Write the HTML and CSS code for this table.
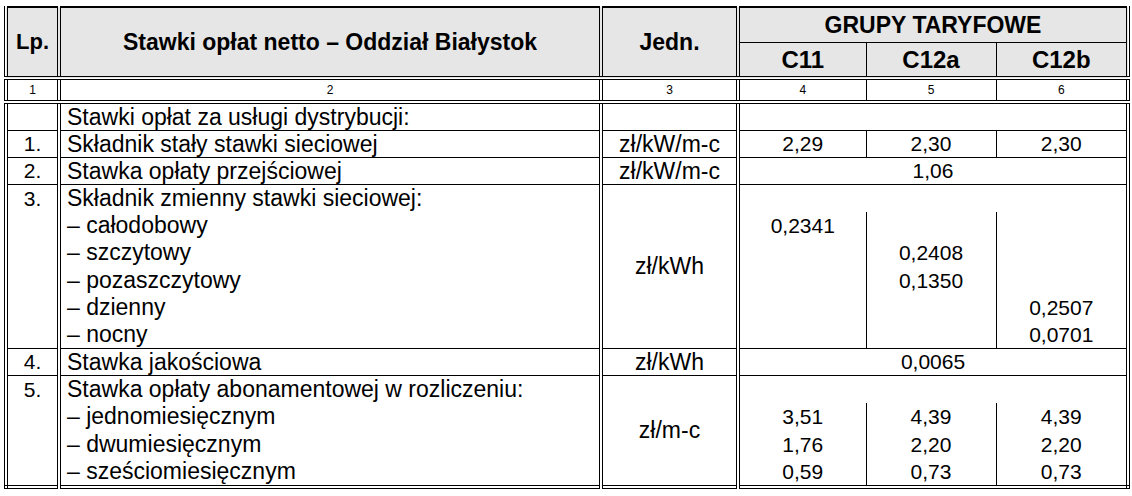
FILE: index.html
```html
<!DOCTYPE html>
<html lang="pl">
<head>
<meta charset="utf-8">
<title>Stawki opłat netto – Oddział Białystok</title>
<link rel="stylesheet" href="styles.css">
</head>
<body>
<table class="tariff">
  <colgroup>
    <col class="c-lp"><col class="c-desc"><col class="c-unit"><col class="c-g1"><col class="c-g2"><col class="c-g3">
  </colgroup>
  <thead>
    <tr class="h1">
      <th rowspan="2" class="lph">Lp.</th>
      <th rowspan="2">Stawki opłat netto – Oddział Białystok</th>
      <th rowspan="2">Jedn.</th>
      <th colspan="3">GRUPY TARYFOWE</th>
    </tr>
    <tr class="h2">
      <th>C11</th><th>C12a</th><th>C12b</th>
    </tr>
    <tr class="nums">
      <td>1</td><td>2</td><td>3</td><td>4</td><td>5</td><td>6</td>
    </tr>
  </thead>
  <tbody>
    <tr>
      <td></td><td class="desc">Stawki opłat za usługi dystrybucji:</td><td></td><td colspan="3"></td>
    </tr>
    <tr>
      <td class="lp">1.</td><td class="desc">Składnik stały stawki sieciowej</td><td class="unit">zł/kW/m-c</td>
      <td class="v">2,29</td><td class="v">2,30</td><td class="v">2,30</td>
    </tr>
    <tr>
      <td class="lp">2.</td><td class="desc">Stawka opłaty przejściowej</td><td class="unit">zł/kW/m-c</td>
      <td colspan="3" class="v">1,06</td>
    </tr>
    <tr class="sub">
      <td class="lp top" rowspan="6">3.</td><td class="desc ob">Składnik zmienny stawki sieciowej:</td><td class="unit" rowspan="6">zł/kWh</td>
      <td colspan="3" class="ob"></td>
    </tr>
    <tr class="sub">
      <td class="desc ot ob">– całodobowy</td>
      <td class="v ot ob">0,2341</td><td class="ot ob"></td><td class="ot ob"></td>
    </tr>
    <tr class="sub">
      <td class="desc ot ob">– szczytowy</td>
      <td class="ot ob"></td><td class="v ot ob">0,2408</td><td class="ot ob"></td>
    </tr>
    <tr class="sub">
      <td class="desc ot ob">– pozaszczytowy</td>
      <td class="ot ob"></td><td class="v ot ob">0,1350</td><td class="ot ob"></td>
    </tr>
    <tr class="sub">
      <td class="desc ot ob">– dzienny</td>
      <td class="ot ob"></td><td class="ot ob"></td><td class="v ot ob">0,2507</td>
    </tr>
    <tr class="sub">
      <td class="desc ot">– nocny</td>
      <td class="ot"></td><td class="ot"></td><td class="v ot">0,0701</td>
    </tr>
    <tr>
      <td class="lp">4.</td><td class="desc">Stawka jakościowa</td><td class="unit">zł/kWh</td>
      <td colspan="3" class="v">0,0065</td>
    </tr>
    <tr class="sub">
      <td class="lp top" rowspan="4">5.</td><td class="desc ob">Stawka opłaty abonamentowej w rozliczeniu:</td><td class="unit" rowspan="4">zł/m-c</td>
      <td colspan="3" class="ob"></td>
    </tr>
    <tr class="sub">
      <td class="desc ot ob">– jednomiesięcznym</td>
      <td class="v ot ob">3,51</td><td class="v ot ob">4,39</td><td class="v ot ob">4,39</td>
    </tr>
    <tr class="sub">
      <td class="desc ot ob">– dwumiesięcznym</td>
      <td class="v ot ob">1,76</td><td class="v ot ob">2,20</td><td class="v ot ob">2,20</td>
    </tr>
    <tr class="sub">
      <td class="desc ot">– sześciomiesięcznym</td>
      <td class="v ot">0,59</td><td class="v ot">0,73</td><td class="v ot">0,73</td>
    </tr>
  </tbody>
</table>
</body>
</html>
```
FILE: styles.css
```css
html, body {
  margin: 0;
  background: #ffffff;
}
body {
  padding: 6px 0 0 4px;
  font-family: "Liberation Sans", Arial, sans-serif;
  color: #000000;
}
.tariff {
  border-collapse: collapse;
  table-layout: fixed;
  width: 1125px;
  border-top: 2px solid #000;
  border-left: 4px double #000;
  border-right: 4px double #000;
  border-bottom: 4px double #000;
}
.c-lp { width: 53px; border-right: 4px double #000; }
.c-desc { width: 542px; border-right: 4px double #000; }
.c-unit { width: 137px; border-right: 4px double #000; }
.c-g1 { width: 128px; }
.c-g2 { width: 130px; }
.c-g3 { width: 132px; }

th {
  background: #e6e6e6;
  font-weight: bold;
  font-size: 23px;
  border: 1px solid #000;
  padding: 0;
  text-align: center;
  vertical-align: middle;
  white-space: nowrap;
}
.lph { font-size: 22px; }
.h1 th { height: 34px; }
.h2 th { height: 33px; font-size: 24px; }

.nums {
  border-top: 4px double #000;
  border-bottom: 4px double #000;
}
.nums td {
  font-size: 12px;
  line-height: 14px;
  height: 20px;
  padding: 0;
  text-align: center;
  border: 1px solid #000;
}

tbody td {
  font-size: 23px;
  line-height: 26px;
  padding: 0;
  border: 1px solid #000;
  vertical-align: middle;
  white-space: nowrap;
}
tbody .sub td { line-height: 27.2px; }
.desc { padding-left: 6px; }
.lp { text-align: center; }
tbody td.lp { font-size: 21px; }
.top { vertical-align: top; }
.unit { text-align: center; }
tbody td.v { text-align: center; font-size: 21px; }
.ot { border-top-style: none; }
.ob { border-bottom-style: none; }
```
